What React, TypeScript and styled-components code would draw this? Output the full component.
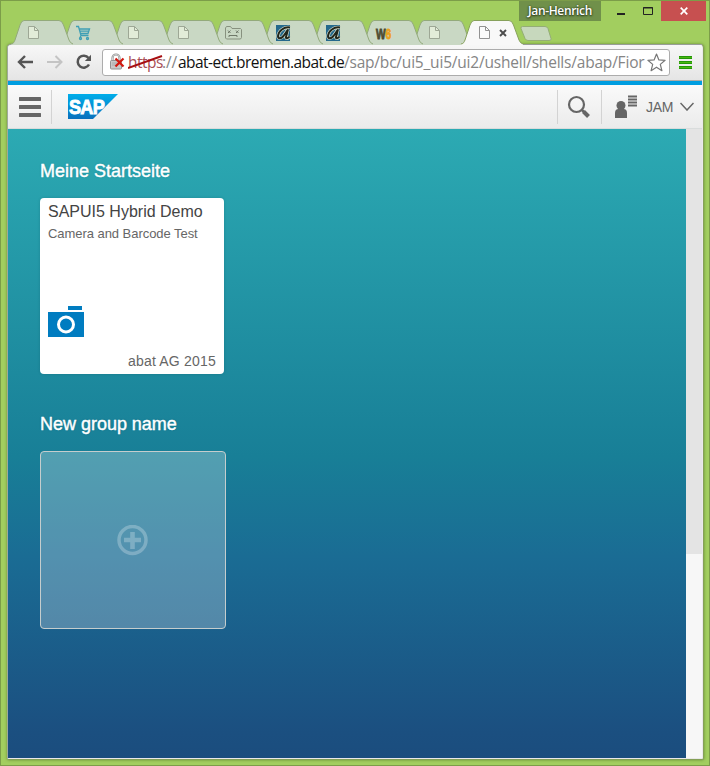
import React from 'react';
import styled, { createGlobalStyle } from 'styled-components';

const Global = createGlobalStyle`
  * { box-sizing: border-box; }
  body { margin: 0; font-family: "Liberation Sans", Arial, sans-serif; overflow: hidden; }
  svg { display: block; flex: none; }
`;

const Desktop = styled.div`
  width: 710px;
  height: 766px;
  padding: 0 6px 6px;
  background: #a2ce5f;
  border: 1px solid #7c9d49;
  display: flex;
  flex-direction: column;
`;

const TitleBar = styled.div`
  height: 43px;
  flex: none;
  position: relative;
`;

const WindowControls = styled.div`
  display: flex;
  justify-content: flex-end;
  align-items: flex-start;
  height: 20px;
  margin-right: -3px;
`;

const Profile = styled.div`
  width: 82px;
  height: 20px;
  margin-right: 7px;
  background: #70904a;
  color: #fff;
  font: 600 12px/20px "Open Sans", sans-serif;
  letter-spacing: -0.35px;
  text-align: center;
  text-shadow: 0 0 2px #26351a, 0 1px 2px #26351a;
`;

const WinButton = styled.div<{ $w: number; $danger?: boolean }>`
  width: ${p => p.$w}px;
  height: 20px;
  display: flex;
  align-items: center;
  justify-content: center;
  background: ${p => (p.$danger ? '#c75050' : 'transparent')};
`;

const TabStrip = styled.div`
  position: absolute;
  left: 4px;
  top: 19px;
  display: flex;
`;

const TabItem = styled.div<{ $z: number }>`
  position: relative;
  z-index: ${p => p.$z};
  width: 62px;
  height: 25px;
  margin-right: -12px;
`;

const TabIcon = styled.div<{ $x: number }>`
  position: absolute;
  left: ${p => p.$x}px;
  top: 5px;
  display: flex;
`;

const CloseTab = styled.div`
  position: absolute;
  left: 38px;
  top: 9px;
`;

const NewTab = styled.div`
  margin: 6px 0 0 9px;
`;

const Browser = styled.div`
  flex: 1;
  display: flex;
  flex-direction: column;
  border: 1px solid #929292;
  border-color: #989d98 #85a057 #85a057 #9fa99b;
  border-radius: 4px 4px 2px 2px;
  background: #e9e9e9;
  overflow: hidden;
  box-shadow: 0 0 3px rgba(60, 90, 20, 0.6);
  margin: 0 -1px -1px 0;
  padding-right: 1px;
  padding-bottom: 1px;
`;

const Toolbar = styled.div`
  height: 36px;
  flex: none;
  display: flex;
  align-items: center;
  padding: 0 8px 1px 9px;
  background: linear-gradient(#f7f7f7, #e5e5e5);
  border-bottom: 1px solid #b0aba5;
`;

const NavButton = styled.div<{ $gap: number }>`
  margin-right: ${p => p.$gap}px;
`;

const Address = styled.div`
  width: 568px;
  height: 27px;
  display: flex;
  align-items: center;
  border: 1px solid #acacac;
  border-radius: 3px;
  background: #fff;
  padding-left: 6px;
  margin-right: 9px;
`;

const Url = styled.div`
  width: 517px;
  height: 25px;
  margin-left: 3px;
  margin-right: 2px;
  white-space: nowrap;
  font: 15.5px/24px "Open Sans", "Noto Sans", sans-serif;
  color: #858585;
  position: relative;
  display: flex;
`;

const UrlPart = styled.span<{ $w?: number; $color?: string; $ls: number }>`
  width: ${p => (p.$w ? p.$w + 'px' : 'auto')};
  flex: none;
  color: ${p => p.$color || '#858585'};
  letter-spacing: ${p => p.$ls}px;
`;

const Strike = styled.svg`
  position: absolute;
  left: 0;
  top: 0;
`;

const Shell = styled.div`
  height: 48px;
  flex: none;
  display: flex;
  align-items: center;
  border-top: 4px solid #009de0;
  border-bottom: 1px solid #d9dcdc;
  background: linear-gradient(#fafafa, #ebebeb);
  padding: 0 8px 0 11px;
`;

const Divider = styled.div<{ $l: number; $r: number }>`
  width: 1px;
  height: 34px;
  background: #d3d3d3;
  margin: 0 ${p => p.$r}px 0 ${p => p.$l}px;
`;

const Spacer = styled.div`
  flex: 1;
`;

const UserName = styled.span`
  font-size: 14px;
  color: #666;
  letter-spacing: -0.3px;
  width: 27px;
  margin: 1px 7px 0 9px;
`;

const Content = styled.div`
  flex: 1;
  display: flex;
  min-height: 0;
`;

const Page = styled.main`
  width: 678px;
  padding: 31px 32px 0;
  background: linear-gradient(#2caab3 0%, #187f97 52%, #1a6c94 68%, #1b4f80 96%, #1b4d7e 100%);
`;

const Scrollbar = styled.div`
  flex: 1;
  background: #f7f7f7;
`;

const Thumb = styled.div`
  height: 425px;
  background: #e4e4e4;
`;

const GroupTitle = styled.h2<{ $gap: number; $ls: number }>`
  margin: 0 0 ${p => p.$gap}px;
  font-size: 18px;
  line-height: 22px;
  font-weight: 400;
  color: #fff;
  letter-spacing: ${p => p.$ls}px;
  -webkit-text-stroke: 0.4px #fff;
  text-shadow: 0 0 2px rgba(0, 60, 80, 0.25);
`;

const Tile = styled.div`
  width: 184px;
  height: 176px;
  margin-bottom: 39px;
  padding: 4px 8px;
  border-radius: 4px;
  background: #fff;
  box-shadow: 0 0 3px rgba(0, 50, 60, 0.2);
  display: flex;
  flex-direction: column;
`;

const TileTitle = styled.div`
  font-size: 16px;
  line-height: 19px;
  color: #444;
`;

const TileSubtitle = styled.div`
  font-size: 13px;
  line-height: 16px;
  margin-top: 5px;
  letter-spacing: -0.05px;
  color: #666;
`;

const TileIcon = styled.div`
  margin-top: 64px;
`;

const TileFooter = styled.div`
  margin-top: auto;
  text-align: right;
  font-size: 14px;
  line-height: 18px;
  letter-spacing: 0.2px;
  color: #666;
`;

const AddTile = styled.div`
  width: 186px;
  height: 178px;
  border: 1px solid #c5cdcd;
  border-radius: 4px;
  background: rgba(255, 255, 255, 0.25);
  display: flex;
  align-items: center;
  justify-content: center;
  padding-right: 2px;
`;

const PageIcon = ({ faded }: { faded?: boolean }) => (
  <svg width="13" height="16" viewBox="0 0 13 16">
    <path d="M1.500 1.500h6l4 4v8h-10z" fill={faded ? '#e2ecd8' : '#fafafa'} stroke={faded ? '#9da795' : '#929292'} />
    <path d="M7.500 1.500v4h4" fill="none" stroke={faded ? '#9da795' : '#929292'} />
  </svg>
);

const CartIcon = () => (
  <svg width="16" height="16" viewBox="0 0 16 16" fill="none" stroke="#3f9fb5" strokeWidth="1.300">
    <path d="M1 1.500h2.500L6 10.500h7.500M4.500 4h10l-1.500 4.500H6M5 6.200h9M6 10.500l-1 2" />
    <circle cx="5.500" cy="13.500" r="1" />
    <circle cx="12.500" cy="13.500" r="1" />
  </svg>
);

const DeadIcon = () => (
  <svg width="19" height="16" viewBox="0 0 19 16" fill="none" stroke="#87917f">
    <path d="M1.500 3l1-1.500h4L8 3.500h8.500l1 1v8l-1 1.500h-14l-1-1z" />
    <path d="M4 5.500l2.500 2.500m0-2.500L4 8M12 5.500l2.500 2.500m0-2.500L12 8M5 12v-1.500h8V12" stroke="#6f7868" />
  </svg>
);

const AbatIcon = () => (
  <svg width="17" height="17" viewBox="0 0 17 17">
    <rect width="14" height="16" x="1" fill="#25698c" />
    <path d="M15 2.500C9 1.500 3.500 6 3 11c0 3 3 3 5.500 0L13 4.500 11 12c-.4 1.800 1.800 1.800 3.500-.5" fill="none" stroke="#dbe5d5" strokeWidth="3.200" />
    <path d="M15 2.500C9 1.500 3.500 6 3 11c0 3 3 3 5.500 0L13 4.500 11 12c-.4 1.800 1.800 1.800 3.500-.5" fill="none" stroke="#20251b" strokeWidth="2" />
  </svg>
);

const WgLogo = styled.div`
  font: 700 15px/17px "Liberation Sans", sans-serif;
  color: #4d4b31;
  -webkit-text-stroke: 0.9px currentColor;
  transform: scaleX(0.68);
  transform-origin: left;
  letter-spacing: -0.3px;
  span { color: #e9a01d; }
`;

const TabShape = ({ active }: { active?: boolean }) => (
  <svg width="62" height="25" viewBox="0 0 62 25">
    <path
      d="M0 24C3 23.500 3 22 4 20L9 5Q10.500 .5 13 .5H48Q51 .5 52.500 5L58 20Q59 23 62 24V25H0z"
      fill={active ? '#f8f8f8' : '#c9d8c4'}
    />
    <path
      d="M0 24C3 23.500 3 22 4 20L9 5Q10.500 .5 13 .5H48Q51 .5 52.500 5L58 20Q59 23 62 24"
      fill="none"
      stroke={active ? '#87a15c' : '#93aa7b'}
    />
  </svg>
);

const tabs = [
  { x: 16, icon: <PageIcon faded /> },
  { x: 14, icon: <CartIcon /> },
  { x: 16, icon: <PageIcon faded /> },
  { x: 16, icon: <PageIcon faded /> },
  { x: 13, icon: <DeadIcon /> },
  { x: 14, icon: <AbatIcon /> },
  { x: 14, icon: <AbatIcon /> },
  { x: 15, icon: <WgLogo>W<span>6</span></WgLogo> },
  { x: 17, icon: <PageIcon faded /> },
];

export default function App() {
  return (
    <>
      <Global />
      <Desktop>
        <TitleBar>
          <WindowControls>
            <Profile>Jan-Henrich</Profile>
            <WinButton $w={26}>
              <svg width="8" height="12"><rect y="8" width="8" height="2" fill="#222" /></svg>
            </WinButton>
            <WinButton $w={27}>
              <svg width="10" height="10"><path d="M.5 1.500v7h9v-7zM0 2h10" fill="none" stroke="#222" /></svg>
            </WinButton>
            <WinButton $w={45} $danger>
              <svg width="8" height="8"><path d="M.7 .7l6.600 6.600M7.300 .7L.7 7.300" stroke="#fff" strokeWidth="1.700" /></svg>
            </WinButton>
          </WindowControls>
          <TabStrip>
            {tabs.map((t, i) => (
              <TabItem key={i} $z={10 - i}>
                <TabShape />
                <TabIcon $x={t.x}>{t.icon}</TabIcon>
              </TabItem>
            ))}
            <TabItem $z={20}>
              <TabShape active />
              <TabIcon $x={17}><PageIcon /></TabIcon>
              <CloseTab>
                <svg width="8" height="8"><path d="M1 1l6 6M7 1L1 7" stroke="#4c4c4c" strokeWidth="1.900" /></svg>
              </CloseTab>
            </TabItem>
            <NewTab>
              <svg width="32" height="16" viewBox="0 0 32 16">
                <path d="M2.500 .5H25q2 0 3 2l3 10q1 2-2 2H8q-2 0-3-2L1 2.500Q.5 .5 2.500 .5z" fill="#c7d8bd" stroke="#94ad76" />
              </svg>
            </NewTab>
          </TabStrip>
        </TitleBar>

        <Browser>
          <Toolbar>
            <NavButton $gap={13}>
              <svg width="17" height="14" fill="none" stroke="#555" strokeWidth="2.400"><path d="M16 7H3M8 1L2 7l6 6" /></svg>
            </NavButton>
            <NavButton $gap={13}>
              <svg width="16" height="14" fill="none" stroke="#c4c4c4" strokeWidth="2"><path d="M0 7h14M8.500 1l6 6-6 6" /></svg>
            </NavButton>
            <NavButton $gap={9}>
              <svg width="17" height="16" fill="none" stroke="#555" strokeWidth="2.500">
                <path d="M12.500 4A6 6 0 1 0 13 10.500" />
                <path d="M15 .8V7H8.800z" fill="#555" stroke="none" />
              </svg>
            </NavButton>
            <Address>
              <svg width="16" height="18" viewBox="0 0 16 18">
                <path d="M3.500 9V5a3.500 3.500 0 0 1 7 0v4" fill="none" stroke="#929292" strokeWidth="2.200" />
                <path d="M3.500 9V5a3.500 3.500 0 0 1 7 0v4" fill="none" stroke="#e2e2e2" strokeWidth=".8" />
                <rect x="1.500" y="7.500" width="11" height="8.500" rx="1" fill="#c9c9c9" stroke="#929292" />
                <path d="M3 10h5M3 12h5" stroke="#aaa" />
                <path d="M6.500 5.500l8 8M14.500 5.500l-8 8" stroke="#d3180f" strokeWidth="2.200" />
              </svg>
              <Url>
                <UrlPart $w={34} $color="#a94e55" $ls={-0.5}>https</UrlPart>
                <UrlPart $w={16} $ls={-0.1}>://</UrlPart>
                <UrlPart $w={166} $color="#111" $ls={-0.54}>abat-ect.bremen.abat.de</UrlPart>
                <UrlPart $ls={-0.2}>/sap/bc/ui5_ui5/ui2/ushell/shells/abap/Fior</UrlPart>
                <Strike width="36" height="25"><path d="M0 18L34 6" stroke="#a80f12" strokeWidth="2" /></Strike>
              </Url>
              <svg width="19" height="19" viewBox="0 0 19 19">
                <path d="M9.500 1l2.400 5.900 6.200.4-4.800 4.100 1.600 6.300-5.400-3.500-5.400 3.500 1.600-6.300L.9 7.300l6.200-.4z" fill="#fff" stroke="#777" strokeWidth="1.200" strokeLinejoin="round" />
              </svg>
            </Address>
            <svg width="14" height="13">
              <path d="M0 1.500h13M0 6.500h13M0 11.500h13" stroke="#23960b" strokeWidth="3" />
              <path d="M0 1.500h13M0 6.500h13M0 11.500h13" stroke="#49b70d" strokeWidth="1" />
            </svg>
          </Toolbar>

          <Shell>
            <svg width="22" height="20"><path d="M1 2h20M1 10h20M1 18h20" stroke="#666" strokeWidth="4" strokeLinecap="round" /></svg>
            <Divider $l={10} $r={16} />
            <svg width="50" height="25" viewBox="0 0 50 25">
              <defs>
                <linearGradient id="sap" x1="0" y1="0" x2="0" y2="1">
                  <stop offset="0" stopColor="#00aeea" />
                  <stop offset="1" stopColor="#0870bd" />
                </linearGradient>
              </defs>
              <path d="M0 0h50L25 25H0z" fill="url(#sap)" />
              <text x="1" y="19.500" textLength="35" lengthAdjust="spacingAndGlyphs" fontFamily="Liberation Sans" fontWeight="700" fontSize="19.500" letterSpacing="-0.8" fill="#fff" stroke="#fff" strokeWidth=".9">SAP</text>
            </svg>
            <Spacer />
            <Divider $l={0} $r={9} />
            <svg width="24" height="24" viewBox="0 0 24 24" fill="none" stroke="#666">
              <circle cx="9.500" cy="9.500" r="7.500" strokeWidth="2.200" />
              <path d="M14.500 14.500l3 3" strokeWidth="2.500" />
              <path d="M16.500 16.500l5 5" strokeWidth="4" />
            </svg>
            <Divider $l={10} $r={12} />
            <svg width="23" height="23" viewBox="0 0 23 23" fill="#666">
              <circle cx="7" cy="10.500" r="4.500" />
              <path d="M1 23v-5q0-4 3.500-4h5q3.500 0 3.500 4v5z" />
              <path d="M14 1.500H23M14 4.500H23M14 7.500H23M14 10.500H23" stroke="#666" strokeWidth="2" />
            </svg>
            <UserName>JAM</UserName>
            <svg width="14" height="9" fill="none" stroke="#666" strokeWidth="1.500"><path d="M.5 1l6.500 7 6.500-7" /></svg>
          </Shell>

          <Content>
            <Page>
              <GroupTitle $gap={16} $ls={0}>Meine Startseite</GroupTitle>
              <Tile>
                <TileTitle>SAPUI5 Hybrid Demo</TileTitle>
                <TileSubtitle>Camera and Barcode Test</TileSubtitle>
                <TileIcon>
                  <svg width="36" height="31">
                    <path d="M0 6h36v25H0zM20 0h14v4H20z" fill="#007cc0" />
                    <circle cx="18" cy="18.500" r="7.500" fill="none" stroke="#fff" strokeWidth="3" />
                  </svg>
                </TileIcon>
                <TileFooter>abat AG 2015</TileFooter>
              </Tile>
              <GroupTitle $gap={16} $ls={-0.02}>New group name</GroupTitle>
              <AddTile>
                <svg width="31" height="31" fill="none" stroke="rgba(255,255,255,.25)">
                  <circle cx="15.500" cy="15" r="13.500" strokeWidth="3.500" />
                  <path d="M13.200 7h4.600v5.700H24v4.600h-6.200V24h-4.600v-6.700H7v-4.600h6.200z" fill="rgba(255,255,255,.25)" stroke="none" />
                </svg>
              </AddTile>
            </Page>
            <Scrollbar><Thumb /></Scrollbar>
          </Content>
        </Browser>
      </Desktop>
    </>
  );
}
